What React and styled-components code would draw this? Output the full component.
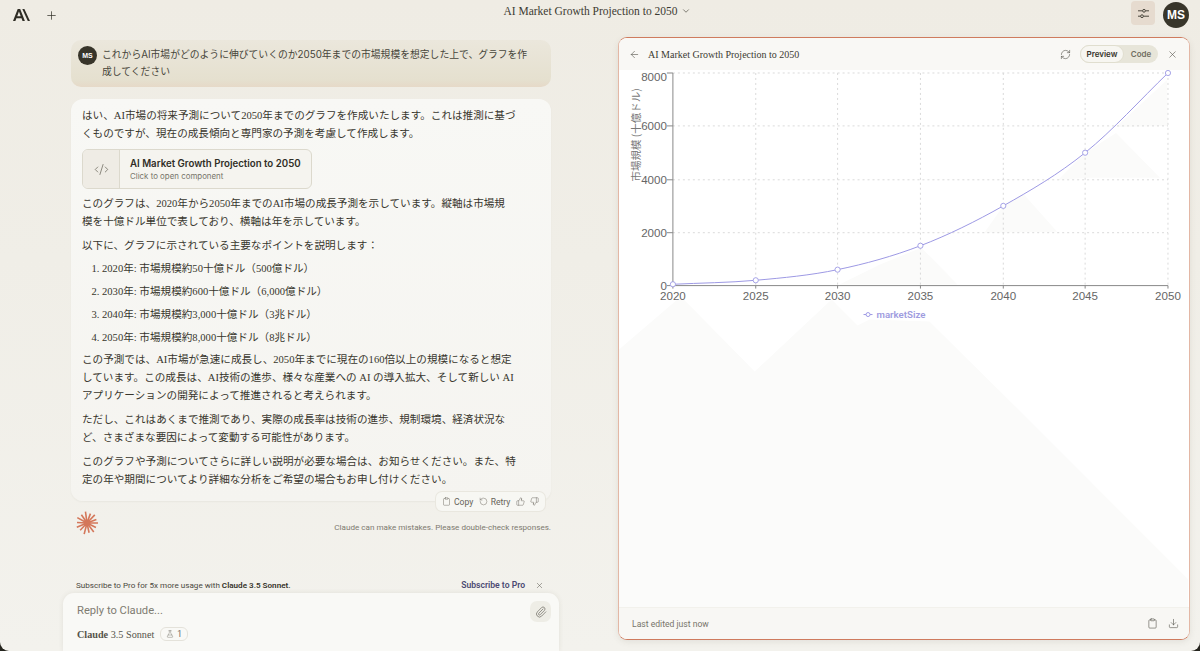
import React from "react";
import styled, { createGlobalStyle } from "styled-components";
import { ArrowLeft, ChevronDown, Clipboard, CodeXml, Download, FlaskConical, Paperclip, Plus, RefreshCw, RotateCcw, ThumbsDown, ThumbsUp, X } from "lucide-react";

const UI = `"Inter", "Noto Sans CJK JP", "Liberation Sans", sans-serif`;
const SMALL = `"Roboto", "Noto Sans CJK JP", "Liberation Sans", sans-serif`;
const BODY = `"Liberation Serif", "Noto Sans CJK JP", serif`;
const HEAD = `"Liberation Serif", "Noto Serif", serif`;

const Global = createGlobalStyle`
  html, body { margin: 0; padding: 0; height: 100%; background: #25241e; overflow: hidden; }
  #root { height: 100%; }
  * { box-sizing: border-box; }
`;

const Shell = styled.div`
  height: 651px; width: 1200px; display: flex; flex-direction: column; overflow: hidden;
  border-radius: 0 0 9px 9px;
  background: linear-gradient(180deg, #efece4 0%, #f0eee7 40%, #f3f2ed 100%);
`;
const TopBar = styled.header`
  height: 30px; flex: none; display: grid; grid-template-columns: 1fr auto 1fr; padding: 0 11px 0 13px;
`;
const Brand = styled.div`
  display: flex; align-items: center; gap: 15px; color: #2f2d25;
`;
const Logo = styled.svg`width: 17px; height: 12px; fill: #2f2d25; display: block;`;
const Title = styled.div`
  display: flex; align-items: center; gap: 3px; height: 21px; margin-left: -8px;
  font: 11.5px ${HEAD}; color: #3d3b32;
`;
const TopActions = styled.div`display: flex; justify-content: flex-end; align-items: flex-start; gap: 8px; padding-top: 2px;`;
const SettingsButton = styled.div`
  width: 24px; height: 24px; margin-top: -1px; border-radius: 4px; background: #e6dbcf;
  display: flex; align-items: center; justify-content: center;
`;
const Avatar = styled.div`
  width: ${p => p.$size}px; height: ${p => p.$size}px; flex: none; border-radius: 50%; background: #38352a; color: #fff;
  font: 700 ${p => p.$font}px "Liberation Sans", sans-serif; display: flex; align-items: center; justify-content: center;
`;
const Main = styled.main`flex: 1; min-height: 0; display: grid; grid-template-columns: 618px 572px;`;
const ChatColumn = styled.section`display: flex; flex-direction: column; padding: 10px 0 0 71px; min-height: 0;`;
const UserBubble = styled.div`
  width: 480px; height: 47px; flex: none; display: flex; gap: 5px; padding: 6px 7px; border-radius: 10px;
  background: linear-gradient(180deg, #ebe7dc 0%, #e5e0cf 85%, #e6d9c8 100%);
  font: 9.8px/17px ${UI}; color: #47453a; white-space: nowrap;
`;
const AssistantBubble = styled.article`
  position: relative; width: 480px; margin-top: 12px; flex: none; padding: 8px 11px 12px; border-radius: 12px;
  display: flex; flex-direction: column; gap: 6px;
  background: linear-gradient(180deg, #f8f8f5 0%, #f5f4f0 100%);
  box-shadow: 0 1px 2px rgba(90, 80, 60, .06);
  font: 10.6px/18px ${BODY}; color: #38362d;
`;
const Para = styled.p`margin: 0; white-space: nowrap;`;
const ArtifactCard = styled.div`
  width: 230px; height: 40px; display: flex; border: 1px solid #dcd9cd; border-radius: 6px; overflow: hidden; background: #f5f4ef;
`;
const ArtifactIcon = styled.div`
  width: 37px; flex: none; background: #efece5; border-right: 1px solid #dcd9cd; color: #5f5c50;
  display: flex; align-items: center; justify-content: center;
`;
const ArtifactText = styled.div`display: flex; flex-direction: column; justify-content: center; padding: 0 0 0 10px; gap: 1px;`;
const ArtifactTitle = styled.div`font: 600 9.7px/13px ${UI}; color: #302e26; white-space: nowrap;`;
const ArtifactSub = styled.div`font: 400 7.9px/10px ${UI}; color: #77746a; white-space: nowrap;`;
const List = styled.ol`
  margin: -1px 0 -2px; padding: 0 0 0 20px; display: flex; flex-direction: column; gap: 5px; white-space: nowrap;
`;
const ActionBar = styled.div`
  position: absolute; right: 6px; bottom: -10px; height: 19px; width: 109px; padding: 0 6px; border-radius: 6px;
  display: flex; align-items: center; justify-content: space-between;
  background: #f7f7f3; box-shadow: 0 0 0 1px #e9e7df; color: #66635a; font: 8.6px ${SMALL};
`;
const ActionItem = styled.span`display: inline-flex; align-items: center; gap: 3px;`;
const StatusRow = styled.div`
  width: 480px; height: 22px; margin-top: 11px; padding-left: 5px; flex: none; display: flex; align-items: center; justify-content: space-between;
`;
const Disclaimer = styled.span`font: 8.1px ${SMALL}; color: #7d7a70; padding-top: 8px;`;
const Spacer = styled.div`flex: 1;`;
const Upsell = styled.div`
  width: 468px; margin: 0 0 2px 5px; flex: none; display: flex; align-items: center; justify-content: space-between;
  font: 8.1px/12px ${SMALL}; color: #4a473d;
  b { font-weight: 600; color: #35332a; }
`;
const UpsellLink = styled.span`font: 600 8.6px/12px ${SMALL}; color: #4b4a72; display: inline-flex; align-items: center; gap: 10px;`;
const Composer = styled.div`
  width: 496px; height: 58px; margin-left: -8px; flex: none; padding: 8px 8px 0 14px; border-radius: 11px 11px 0 0;
  background: #f9f9f6; box-shadow: 0 0 5px rgba(90, 80, 60, .1);
`;
const ComposerTop = styled.div`display: flex; justify-content: space-between; align-items: flex-start; height: 22px;`;
const Placeholder = styled.span`font: 11.2px/20px ${SMALL}; color: #7f7c72;`;
const AttachButton = styled.div`
  width: 21px; height: 21px; border-radius: 7px; background: #eeede6; color: #55534a; display: flex; align-items: center; justify-content: center;
`;
const ModelRow = styled.div`display: flex; align-items: center; gap: 6px; margin-top: 4px; font: 10.2px ${HEAD}; color: #55534a; b { font-weight: 700; }`;
const Pill = styled.span`
  display: inline-flex; align-items: center; gap: 3px; height: 14px; padding: 0 5px; border-radius: 6px; border: 1px solid #e4e2da;
  color: #6d6a60; font: 8.4px ${SMALL};
`;
const Panel = styled.aside`
  margin-top: 7px; height: 603px; display: flex; flex-direction: column; overflow: hidden; background: #fff;
  border-radius: 9px; border: 1px solid #e3b7a5; border-top: 1.5px solid #cf7b5e; border-bottom: 1.5px solid #cf7b5e;
  box-shadow: 0 2px 6px rgba(90, 80, 60, .1);
`;
const PanelHeader = styled.div`
  height: 32px; flex: none; display: flex; align-items: center; padding: 0 11px 0 10px; background: #f9f8f5; color: #55534a;
`;
const PanelTitle = styled.div`flex: 1; margin-left: 8px; font: 10px ${HEAD}; color: #3d3b32;`;
const Toggle = styled.div`
  display: flex; align-items: center; width: 78px; height: 18px; margin: 0 9px 0 9px; border-radius: 9px; background: #e7e5d9; font: 600 8px ${UI};
`;
const ToggleItem = styled.span`
  height: 100%; display: flex; align-items: center; justify-content: center; border-radius: 9px;
  flex: ${p => (p.$active ? "0 0 44px" : "1")};
  background: ${p => (p.$active ? "#f7f6f1" : "transparent")};
  border: ${p => (p.$active ? "1px solid #e0decf" : "none")};
  color: ${p => (p.$active ? "#35332a" : "#6f6c60")};
`;
const PanelBody = styled.div`flex: 1; min-height: 0;`;
const Plot = styled.svg`display: block; width: 570px; height: 100%;`;
const Tick = styled.text`font: 11.6px "Liberation Sans", sans-serif; fill: #666;`;
const AxisTitle = styled.text`font: 10.5px "Noto Sans CJK JP", sans-serif; fill: #777;`;
const LegendLabel = styled.text`font: 600 9.7px ${SMALL}; fill: #8884d8; opacity: .8;`;
const PanelFooter = styled.div`
  height: 32px; flex: none; display: flex; align-items: center; justify-content: space-between; padding: 0 10px 0 13px;
  background: #f8f7f4; border-top: 1px solid #f2f1ec; color: #55534a;
`;
const FooterNote = styled.span`font: 8.6px ${SMALL}; color: #77746a;`;
const FooterIcons = styled.div`display: flex; gap: 10px;`;

const X_POS = [673, 756, 838, 921, 1004, 1086, 1169];
const YEARS = [2020, 2025, 2030, 2035, 2040, 2045, 2050];
const VALUES = [50, 200, 600, 1500, 3000, 5000, 8000];
const yOf = v => 286 - (v / 8000) * 213;

function curvePath() {
  const p = X_POS.map((x, i) => [x, yOf(VALUES[i])]);
  const s = p.slice(1).map((q, i) => (q[1] - p[i][1]) / (q[0] - p[i][0]));
  const m = p.map((_, i) => (i === 0 ? s[0] : i === p.length - 1 ? s[s.length - 1] : (s[i - 1] + s[i]) / 2));
  let d = `M${p[0][0]} ${p[0][1]}`;
  for (let i = 0; i < p.length - 1; i++) {
    const h = (p[i + 1][0] - p[i][0]) / 3;
    d += `C${p[i][0] + h} ${p[i][1] + m[i] * h} ${p[i + 1][0] - h} ${p[i + 1][1] - m[i + 1] * h} ${p[i + 1][0]} ${p[i + 1][1]}`;
  }
  return d;
}

const GRID_Y = [73, 126, 180, 233];
const LINE = "#9d99e4";

function Chart() {
  return (
    <Plot viewBox="619 70 570 538" preserveAspectRatio="xMinYMin meet">
      <g fill="#fbfbfa">
        <polygon points="619,350 681,297 755,372 832,300 858,326 870,320 930,322 1009,400 1189,580 1189,608 619,608" />
        <polygon points="1168,80 1169,126 1117,127" />
        <polygon points="1059,180 1086,153 1117,133 1161,178 1090,178" />
        <polygon points="985,233 1004,206 1024,194 1058,232" />
        <polygon points="840,285 880,265 922,248 958,285" />
      </g>
      {GRID_Y.map(y => (
        <line key={y} x1="673" x2="1169" y1={y} y2={y} stroke="#d6d6d6" strokeWidth=".9" strokeDasharray="2 3" />
      ))}
      {X_POS.slice(1).map(x => (
        <line key={x} x1={x} x2={x} y1="73" y2="286" stroke="#d6d6d6" strokeWidth=".9" strokeDasharray="2 3" />
      ))}
      <path d="M673 73V286H1169" fill="none" stroke="#888" strokeWidth="1" />
      <path d="M667 73H673M667 126H673M667 180H673M667 233H673M667 286H673" stroke="#888" strokeWidth="1" />
      {X_POS.map(x => <path key={x} d={`M${x} 286v3`} stroke="#888" strokeWidth="1" />)}
      {[["8000", 81], ["6000", 130], ["4000", 184], ["2000", 237], ["0", 290]].map(([t, y]) => (
        <Tick key={t} x="667" y={y} textAnchor="end">{t}</Tick>
      ))}
      {YEARS.map((yr, i) => (
        <Tick key={yr} x={X_POS[i]} y="300" textAnchor="middle">{yr}</Tick>
      ))}
      <AxisTitle transform="translate(640 135) rotate(-90)" textAnchor="middle">市場規模 (十億ドル)</AxisTitle>
      <path d={curvePath()} fill="none" stroke={LINE} strokeWidth="1" />
      {X_POS.map((x, i) => (
        <circle key={x} cx={x} cy={yOf(VALUES[i])} r="2.6" fill="#fff" stroke={LINE} strokeWidth=".9" />
      ))}
      <path d="M864 315h9" stroke={LINE} strokeWidth="1" />
      <circle cx="868.5" cy="315" r="2" fill="#fff" stroke={LINE} strokeWidth="1" />
      <LegendLabel x="877" y="318.5">marketSize</LegendLabel>
    </Plot>
  );
}

function Spark() {
  const rays = [0, 27, 52, 78, 105, 133, 158, 183, 208, 236, 262, 290, 315, 340];
  return (
    <svg width="22" height="24" viewBox="-11 -12 22 24">
      <circle r="3.4" fill="#d4775a" />
      {rays.map((a, i) => (
        <line key={a} x1="0" y1="0" x2={(i % 2 ? 10 : 11) * Math.cos((a * Math.PI) / 180)} y2={(i % 2 ? 10 : 11.5) * Math.sin((a * Math.PI) / 180)} stroke="#d4775a" strokeWidth="1.6" />
      ))}
    </svg>
  );
}

export default function App() {
  return (
    <>
      <Global />
      <Shell>
        <TopBar>
          <Brand>
            <Logo viewBox="0 0 17 12">
              <path fillRule="evenodd" d="M0 12 4.7 0H7.2L11.9 12H9.5L8.5 9.2H3.4L2.4 12ZM4.2 7.2H7.7L5.95 2.6Z" />
              <path d="M9.3 0H11.4L17 12H14.8Z" />
            </Logo>
            <Plus size={13} strokeWidth={1.3} />
          </Brand>
          <Title>
            AI Market Growth Projection to 2050
            <ChevronDown size={10} strokeWidth={1.5} />
          </Title>
          <TopActions>
            <SettingsButton>
              <svg width="13" height="13" viewBox="0 0 13 13" fill="none" stroke="#4a473d" strokeWidth="1">
                <path d="M1 3.8H5.5M8.5 3.8H12M1 9.2H3.5M6.5 9.2H12" />
                <circle cx="7" cy="3.8" r="1.4" />
                <circle cx="5" cy="9.2" r="1.4" />
              </svg>
            </SettingsButton>
            <Avatar $size={26} $font={12}>MS</Avatar>
          </TopActions>
        </TopBar>
        <Main>
          <ChatColumn>
            <UserBubble>
              <Avatar $size={19} $font={7}>MS</Avatar>
              <span>
                これからAI市場がどのように伸びていくのか2050年までの市場規模を想定した上で、グラフを作<br />成してください
              </span>
            </UserBubble>
            <AssistantBubble>
              <Para>はい、AI市場の将来予測について2050年までのグラフを作成いたします。これは推測に基づ<br />くものですが、現在の成長傾向と専門家の予測を考慮して作成します。</Para>
              <ArtifactCard>
                <ArtifactIcon><CodeXml size={15} strokeWidth={1.1} /></ArtifactIcon>
                <ArtifactText>
                  <ArtifactTitle>AI Market Growth Projection to 2050</ArtifactTitle>
                  <ArtifactSub>Click to open component</ArtifactSub>
                </ArtifactText>
              </ArtifactCard>
              <Para>このグラフは、2020年から2050年までのAI市場の成長予測を示しています。縦軸は市場規<br />模を十億ドル単位で表しており、横軸は年を示しています。</Para>
              <Para>以下に、グラフに示されている主要なポイントを説明します：</Para>
              <List>
                <li>2020年: 市場規模約50十億ドル（500億ドル）</li>
                <li>2030年: 市場規模約600十億ドル（6,000億ドル）</li>
                <li>2040年: 市場規模約3,000十億ドル（3兆ドル）</li>
                <li>2050年: 市場規模約8,000十億ドル（8兆ドル）</li>
              </List>
              <Para>この予測では、AI市場が急速に成長し、2050年までに現在の160倍以上の規模になると想定<br />しています。この成長は、AI技術の進歩、様々な産業への AI の導入拡大、そして新しい AI<br />アプリケーションの開発によって推進されると考えられます。</Para>
              <Para>ただし、これはあくまで推測であり、実際の成長率は技術の進歩、規制環境、経済状況な<br />ど、さまざまな要因によって変動する可能性があります。</Para>
              <Para>このグラフや予測についてさらに詳しい説明が必要な場合は、お知らせください。また、特<br />定の年や期間についてより詳細な分析をご希望の場合もお申し付けください。</Para>
              <ActionBar>
                <ActionItem><Clipboard size={9} strokeWidth={1.2} />Copy</ActionItem>
                <ActionItem><RotateCcw size={9} strokeWidth={1.2} />Retry</ActionItem>
                <ThumbsUp size={9} strokeWidth={1.2} />
                <ThumbsDown size={9} strokeWidth={1.2} />
              </ActionBar>
            </AssistantBubble>
            <StatusRow>
              <Spark />
              <Disclaimer>Claude can make mistakes. Please double-check responses.</Disclaimer>
            </StatusRow>
            <Spacer />
            <Upsell>
              <span>Subscribe to Pro for 5x more usage with <b>Claude 3.5 Sonnet.</b></span>
              <UpsellLink>Subscribe to Pro<X size={9} strokeWidth={1.3} color="#55534a" /></UpsellLink>
            </Upsell>
            <Composer>
              <ComposerTop>
                <Placeholder>Reply to Claude...</Placeholder>
                <AttachButton><Paperclip size={12} strokeWidth={1.2} /></AttachButton>
              </ComposerTop>
              <ModelRow>
                <span><b>Claude</b> 3.5 Sonnet</span>
                <Pill><FlaskConical size={8} strokeWidth={1.2} />1</Pill>
              </ModelRow>
            </Composer>
          </ChatColumn>
          <Panel>
            <PanelHeader>
              <ArrowLeft size={11} strokeWidth={1.3} />
              <PanelTitle>AI Market Growth Projection to 2050</PanelTitle>
              <RefreshCw size={11} strokeWidth={1.3} />
              <Toggle>
                <ToggleItem $active>Preview</ToggleItem>
                <ToggleItem>Code</ToggleItem>
              </Toggle>
              <X size={11} strokeWidth={1.3} />
            </PanelHeader>
            <PanelBody><Chart /></PanelBody>
            <PanelFooter>
              <FooterNote>Last edited just now</FooterNote>
              <FooterIcons>
                <Clipboard size={11} strokeWidth={1.3} />
                <Download size={11} strokeWidth={1.3} />
              </FooterIcons>
            </PanelFooter>
          </Panel>
        </Main>
      </Shell>
    </>
  );
}
